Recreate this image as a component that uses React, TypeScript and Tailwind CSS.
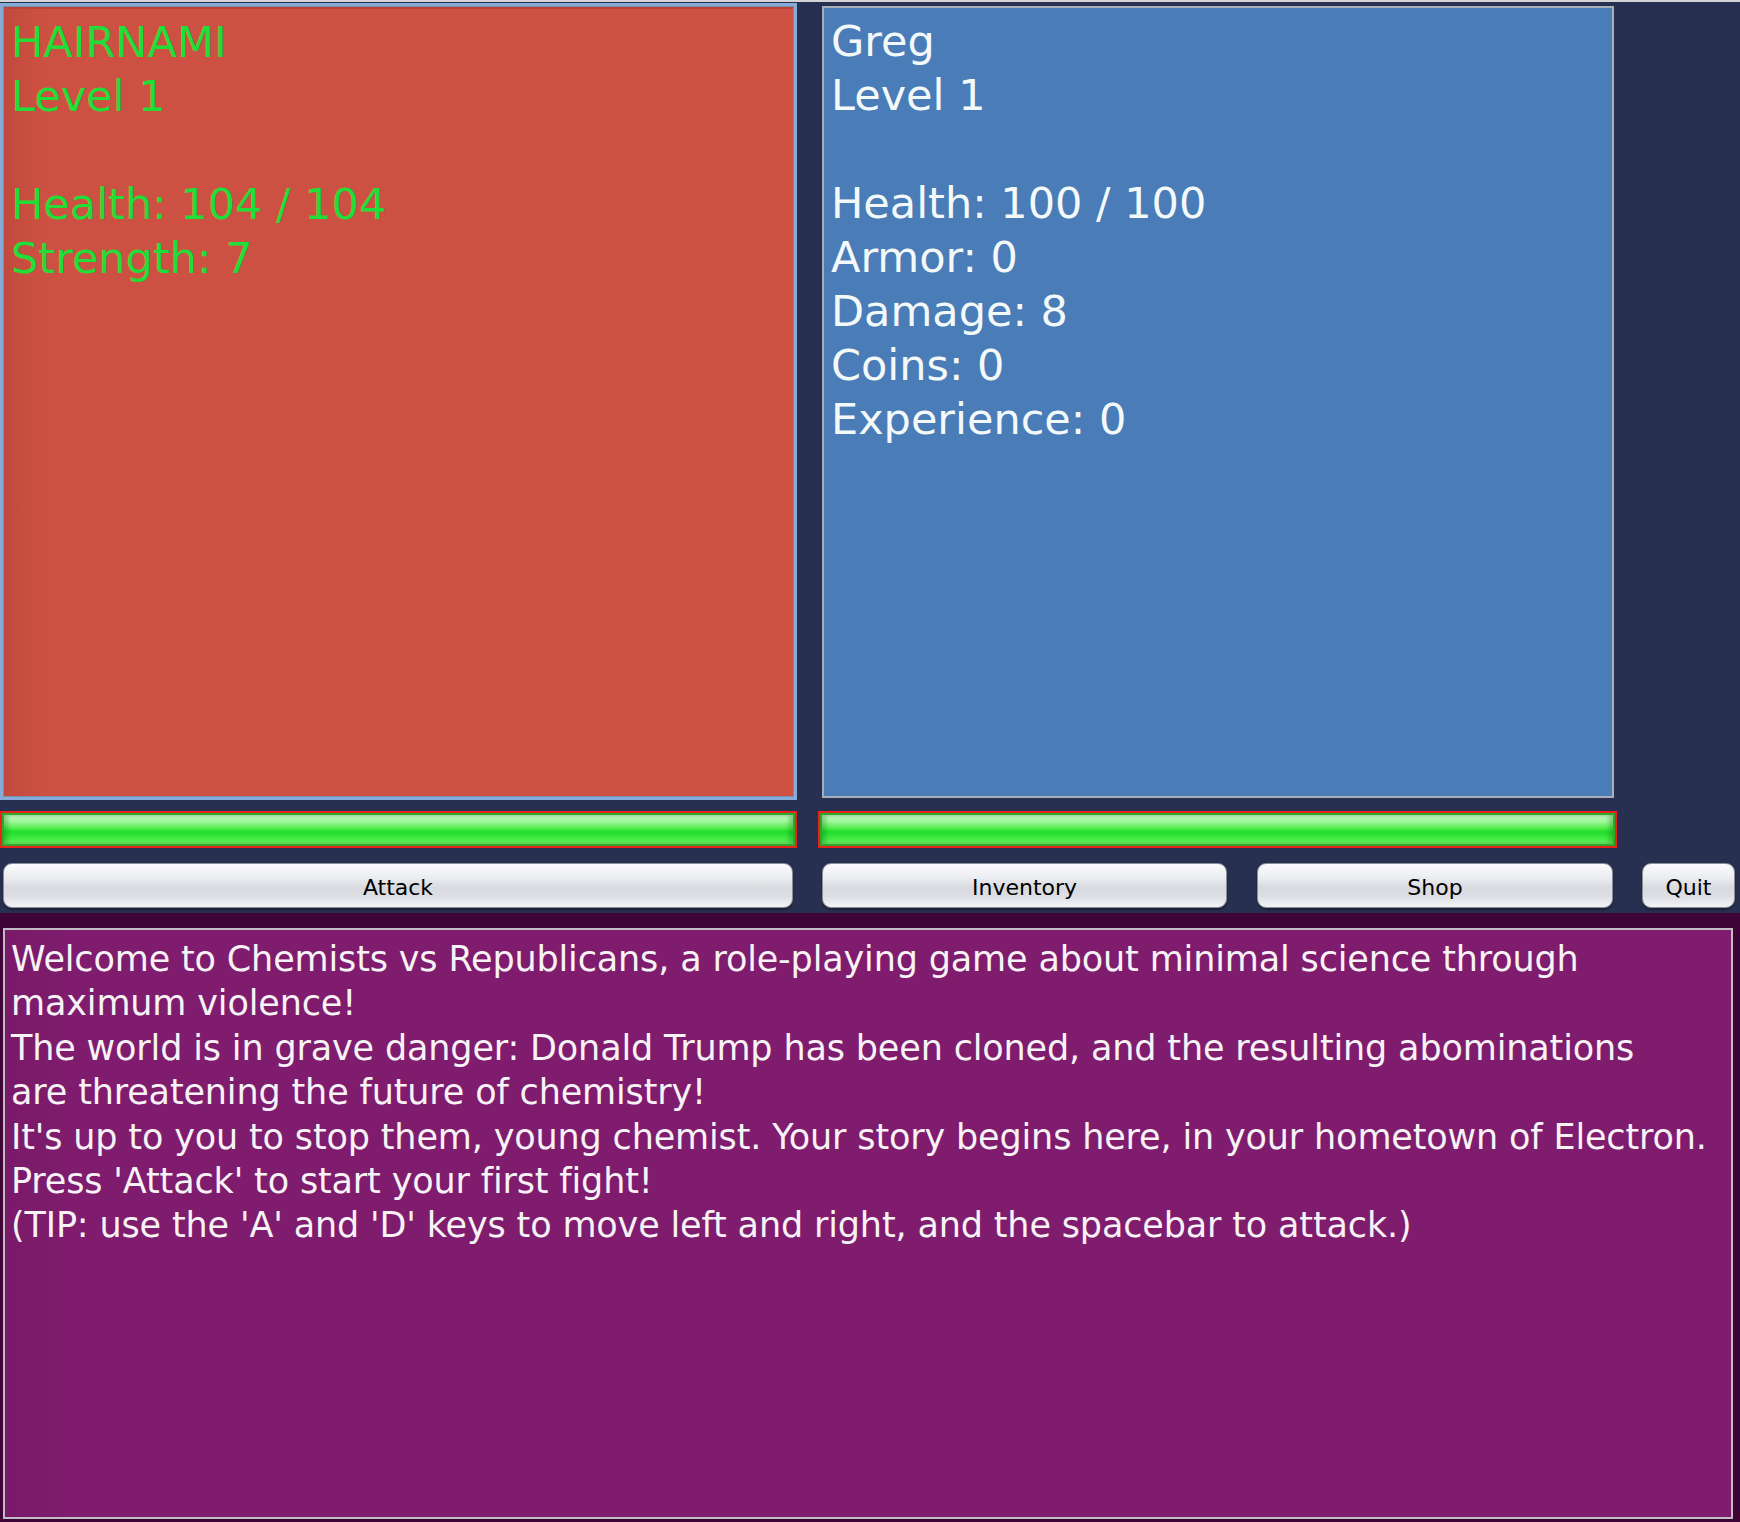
import React from 'react'

const font = { fontFamily: '"DejaVu Sans", "Noto Sans", sans-serif' }

const playerLines = ['HAIRNAMI', 'Level 1', '', 'Health: 104 / 104', 'Strength: 7']
const enemyLines = ['Greg', 'Level 1', '', 'Health: 100 / 100', 'Armor: 0', 'Damage: 8', 'Coins: 0', 'Experience: 0']

const storyLines = [
  'Welcome to Chemists vs Republicans, a role-playing game about minimal science through',
  'maximum violence!',
  'The world is in grave danger: Donald Trump has been cloned, and the resulting abominations',
  'are threatening the future of chemistry!',
  "It's up to you to stop them, young chemist. Your story begins here, in your hometown of Electron.",
  "Press 'Attack' to start your first fight!",
  "(TIP: use the 'A' and 'D' keys to move left and right, and the spacebar to attack.)",
]

const StatLines = ({ lines, color }: { lines: string[]; color: string }) => (
  <div className={`pl-[7px] pt-[6px] text-[43px] leading-[54px] whitespace-pre ${color}`}>
    {lines.map((l, i) => (
      <div key={i} className="h-[54px]">
        {l}
      </div>
    ))}
  </div>
)

const HealthBar = ({ width }: { width: string }) => (
  <div className={`${width} h-[37px] border-2 border-[#e8231c] bg-[#2fa82a] p-[2px]`}>
    <div className="h-full w-full bg-[linear-gradient(to_bottom,#d2fcce_0%,#98f692_25%,#48eb44_48%,#22dc2e_58%,#48ef45_85%,#7cf57a_100%)] shadow-[inset_4px_0_4px_rgba(0,80,0,0.25),inset_-4px_0_4px_rgba(0,80,0,0.25)]" />
  </div>
)

const Button = ({ label, width }: { label: string; width: string }) => (
  <button
    className={`${width} h-[45px] rounded-[9px] border border-[#8b8e96] bg-[linear-gradient(to_bottom,#fbfbfc_0%,#eceef2_30%,#d8dadf_55%,#dcdee3_75%,#f3f4f8_100%)] text-[22px] text-black shadow-[0_2px_2px_rgba(0,0,0,0.35)] flex items-center justify-center pt-[3px]`}
    style={font}
  >
    {label}
  </button>
)

const App: React.FC = () => {
  return (
    <div className="w-[1740px] h-[1522px] flex flex-col bg-[#283052] overflow-hidden" style={font}>
      {/* window top edge */}
      <div className="h-[2px] bg-[#d4d4d6]" />

      {/* Arena */}
      <div className="h-[911px] flex flex-col">
        {/* Panels */}
        <div className="flex items-start pt-[1px]">
          <div className="w-[797px] h-[797px] border-[3px] border-[#86abd9] bg-[#7a8fae] p-[1px]">
            <div className="w-full h-full bg-[linear-gradient(to_right,#c14a3d_0px,#cd5142_40px,#cd5142_100%)] border-t-2 border-[#b84538]">
              <StatLines lines={playerLines} color="text-[#22dc38]" />
            </div>
          </div>
          <div className="ml-[25px] mt-[3px] w-[792px] h-[792px] border-2 border-[#a8adb6] bg-[#4a7cb8]">
            <StatLines lines={enemyLines} color="text-[#f3f9f9]" />
          </div>
        </div>

        {/* Health bars */}
        <div className="flex mt-[11px]">
          <HealthBar width="w-[797px]" />
          <div className="ml-[21px]">
            <HealthBar width="w-[799px]" />
          </div>
        </div>

        {/* Actions */}
        <div className="flex mt-[15px] pl-[3px]">
          <Button label="Attack" width="w-[790px]" />
          <div className="ml-[29px]">
            <Button label="Inventory" width="w-[405px]" />
          </div>
          <div className="ml-[30px]">
            <Button label="Shop" width="w-[356px]" />
          </div>
          <div className="ml-[29px]">
            <Button label="Quit" width="w-[93px]" />
          </div>
        </div>
      </div>

      {/* Story log */}
      <div className="flex-1 bg-[#3f0537] pt-[15px] pl-[3px] pr-[7px] pb-[3px]">
        <div className="h-full border-2 border-[#c2bdc4] bg-[linear-gradient(to_right,#791a68_0px,#7f1c6d_60px,#7f1c6d_100%)] pl-[6px] pt-[7px] text-[35px] tracking-[-0.15px] leading-[44.4px] text-[#f6f2f6]">
          {storyLines.map((l, i) => (
            <div key={i} className="whitespace-nowrap">
              {l}
            </div>
          ))}
        </div>
      </div>
    </div>
  )
}

export default App
